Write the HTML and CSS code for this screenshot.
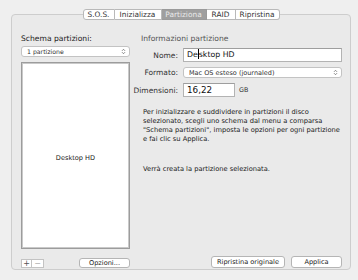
FILE: index.html
```html
<!DOCTYPE html>
<html lang="it">
<head>
  <meta charset="UTF-8" />
  <title>Utility Disco - Partiziona</title>
  <link rel="stylesheet" href="styles.css">
</head>
<body>
  <div class="window">
    <!-- Segmented tabs -->
    <div class="tabs">
      <span class="tab tab-sos">S.O.S.</span>
      <span class="tab tab-init">Inizializza</span>
      <span class="tab tab-active">Partiziona</span>
      <span class="tab tab-raid">RAID</span>
      <span class="tab tab-restore">Ripristina</span>
    </div>

    <div class="panel">
      <div class="left">
        <div class="heading">Schema partizioni:</div>
        <div class="popup popup-scheme">
          <span>1 partizione</span>
          <svg class="arrows" width="5" height="7" viewBox="0 0 5 7"><path d="M1 2.8 L2.5 1.3 L4 2.8 M1 4.2 L2.5 5.7 L4 4.2" fill="none" stroke="#666" stroke-width="0.8"/></svg>
        </div>
        <div class="list">
          <span>Desktop HD</span>
        </div>
        <div class="left-foot">
          <div class="plusminus">
            <span class="pm">+</span>
            <span class="pm pm-off">&minus;</span>
          </div>
          <button class="btn btn-options">Opzioni...</button>
        </div>
      </div>

      <div class="right">
        <div class="heading heading-light">Informazioni partizione</div>
        <div class="form">
          <label>Nome:</label>
          <div class="field field-name">De<span class="caret"></span>sktop HD</div>
          <label>Formato:</label>
          <div class="popup">
            <span>Mac OS esteso (journaled)</span>
            <svg class="arrows" width="5" height="7" viewBox="0 0 5 7"><path d="M1 2.8 L2.5 1.3 L4 2.8 M1 4.2 L2.5 5.7 L4 4.2" fill="none" stroke="#666" stroke-width="0.8"/></svg>
          </div>
          <label>Dimensioni:</label>
          <div class="size-row">
            <div class="field field-size">16,22</div>
            <span class="unit">GB</span>
          </div>
        </div>
        <p class="info">Per inizializzare e suddividere in partizioni il disco<br>selezionato, scegli uno schema dal menu a comparsa<br>"Schema partizioni", imposta le opzioni per ogni partizione<br>e fai clic su Applica.</p>
        <p class="info info-note">Verrà creata la partizione selezionata.</p>
        <div class="right-foot">
          <button class="btn btn-revert">Ripristina originale</button>
          <button class="btn btn-apply">Applica</button>
        </div>
      </div>
    </div>
  </div>
</body>
</html>
```

FILE: styles.css
```css
body {
  margin: 0;
  padding: 0;
  width: 358px;
  height: 280px;
  overflow: hidden;
  background: #efefef;
  font-family: 'DejaVu Sans', sans-serif;
  color: #222;
}

.window {
  padding-top: 9px;
}

/* tabs */
.tabs {
  position: relative;
  z-index: 1;
  display: flex;
  justify-content: center;
  margin-left: 4px;
  height: 11px;
}

.tab {
  box-sizing: border-box;
  height: 11px;
  line-height: 9px;
  font-size: 7.4px;
  text-align: center;
  color: #333;
  background: #fff;
  border: 1px solid #b9b9b9;
  border-left: none;
}

.tab-sos { width: 32px; border-left: 1px solid #b9b9b9; border-radius: 3px 0 0 3px; }
.tab-init { width: 47px; }
.tab-raid { width: 29px; }
.tab-restore { width: 44px; border-radius: 0 3px 3px 0; }

.tab-active {
  width: 45px;
  background: #9f9f9f;
  border-color: #9a9a9a;
  color: #eaeaea;
}

/* main box */
.panel {
  box-sizing: border-box;
  display: flex;
  height: 256px;
  margin: -6px 7px 0 11px;
  padding: 19px 8px 1px 9px;
  background: #eaeaea;
  border: 1px solid #cdcdcd;
  border-radius: 4px;
}

.heading {
  height: 10px;
  line-height: 10px;
  font-size: 7.6px;
  color: #222;
}

.heading-light {
  color: #555;
  padding-left: 8px;
}

.left {
  width: 109px;
  display: flex;
  flex-direction: column;
}

.right {
  flex: 1;
  margin-left: 3px;
  display: flex;
  flex-direction: column;
}

.popup {
  box-sizing: border-box;
  display: flex;
  align-items: center;
  justify-content: space-between;
  height: 11px;
  padding: 0 3px 0 5px;
  font-size: 6.5px;
  color: #333;
  background: #fff;
  border: 1px solid #c3c3c3;
  border-radius: 3px;
}

.popup-scheme {
  margin-top: 2px;
  font-size: 6.2px;
}

.arrows {
  display: block;
}

.list {
  box-sizing: border-box;
  height: 187px;
  margin-top: 5px;
  display: flex;
  align-items: center;
  justify-content: center;
  padding-top: 5px;
  font-size: 6.6px;
  color: #222;
  background: #fff;
  border: 1px solid #9c9c9c;
  box-shadow: inset 0 0 0 1px #c9c9c9;
}

.left-foot {
  display: flex;
  align-items: center;
  justify-content: space-between;
  margin-top: 9px;
}

.plusminus {
  display: flex;
  height: 9px;
}

.pm {
  box-sizing: border-box;
  width: 11px;
  height: 9px;
  line-height: 7px;
  font-size: 8px;
  text-align: center;
  color: #555;
  background: #fff;
  border: 1px solid #c3c3c3;
}

.pm-off {
  width: 12px;
  border-left: none;
  color: #aaa;
}

.btn {
  box-sizing: border-box;
  margin: 0;
  padding: 0;
  height: 10px;
  font-family: 'DejaVu Sans', sans-serif;
  font-size: 6.6px;
  color: #222;
  background: #fff;
  border: 1px solid #b5b5b5;
  border-radius: 3px;
}

.btn-options { width: 51px; }

/* form */
.form {
  display: grid;
  grid-template-columns: 45px 1fr;
  grid-template-rows: 14px 11px 14px;
  column-gap: 5px;
  row-gap: 5px;
  align-items: center;
  margin-top: 4px;
}

.form label {
  text-align: right;
  font-size: 7.5px;
  color: #333;
}

.field {
  box-sizing: border-box;
  height: 14px;
  line-height: 12px;
  padding-left: 3px;
  font-size: 7.8px;
  color: #111;
  background: #fff;
  border: 1px solid #b3b3b3;
  border-top-color: #9e9e9e;
}

.caret {
  display: inline-block;
  width: 1px;
  height: 10px;
  vertical-align: -2px;
  background: #000;
}

.size-row {
  display: flex;
  align-items: center;
}

.field-size {
  width: 52px;
  font-size: 8.8px;
}

.unit {
  margin-left: 4px;
  font-size: 6.4px;
  color: #333;
}

.info {
  margin: 11px 0 0 10px;
  font-size: 6.7px;
  line-height: 9px;
  white-space: nowrap;
  color: #222;
}

.info-note {
  margin-top: 21px;
}

.right-foot {
  display: flex;
  justify-content: flex-end;
  gap: 6px;
  margin-top: auto;
}

.right-foot .btn { height: 12px; }
.btn-revert { width: 74px; }
.btn-apply { width: 51px; }
```
